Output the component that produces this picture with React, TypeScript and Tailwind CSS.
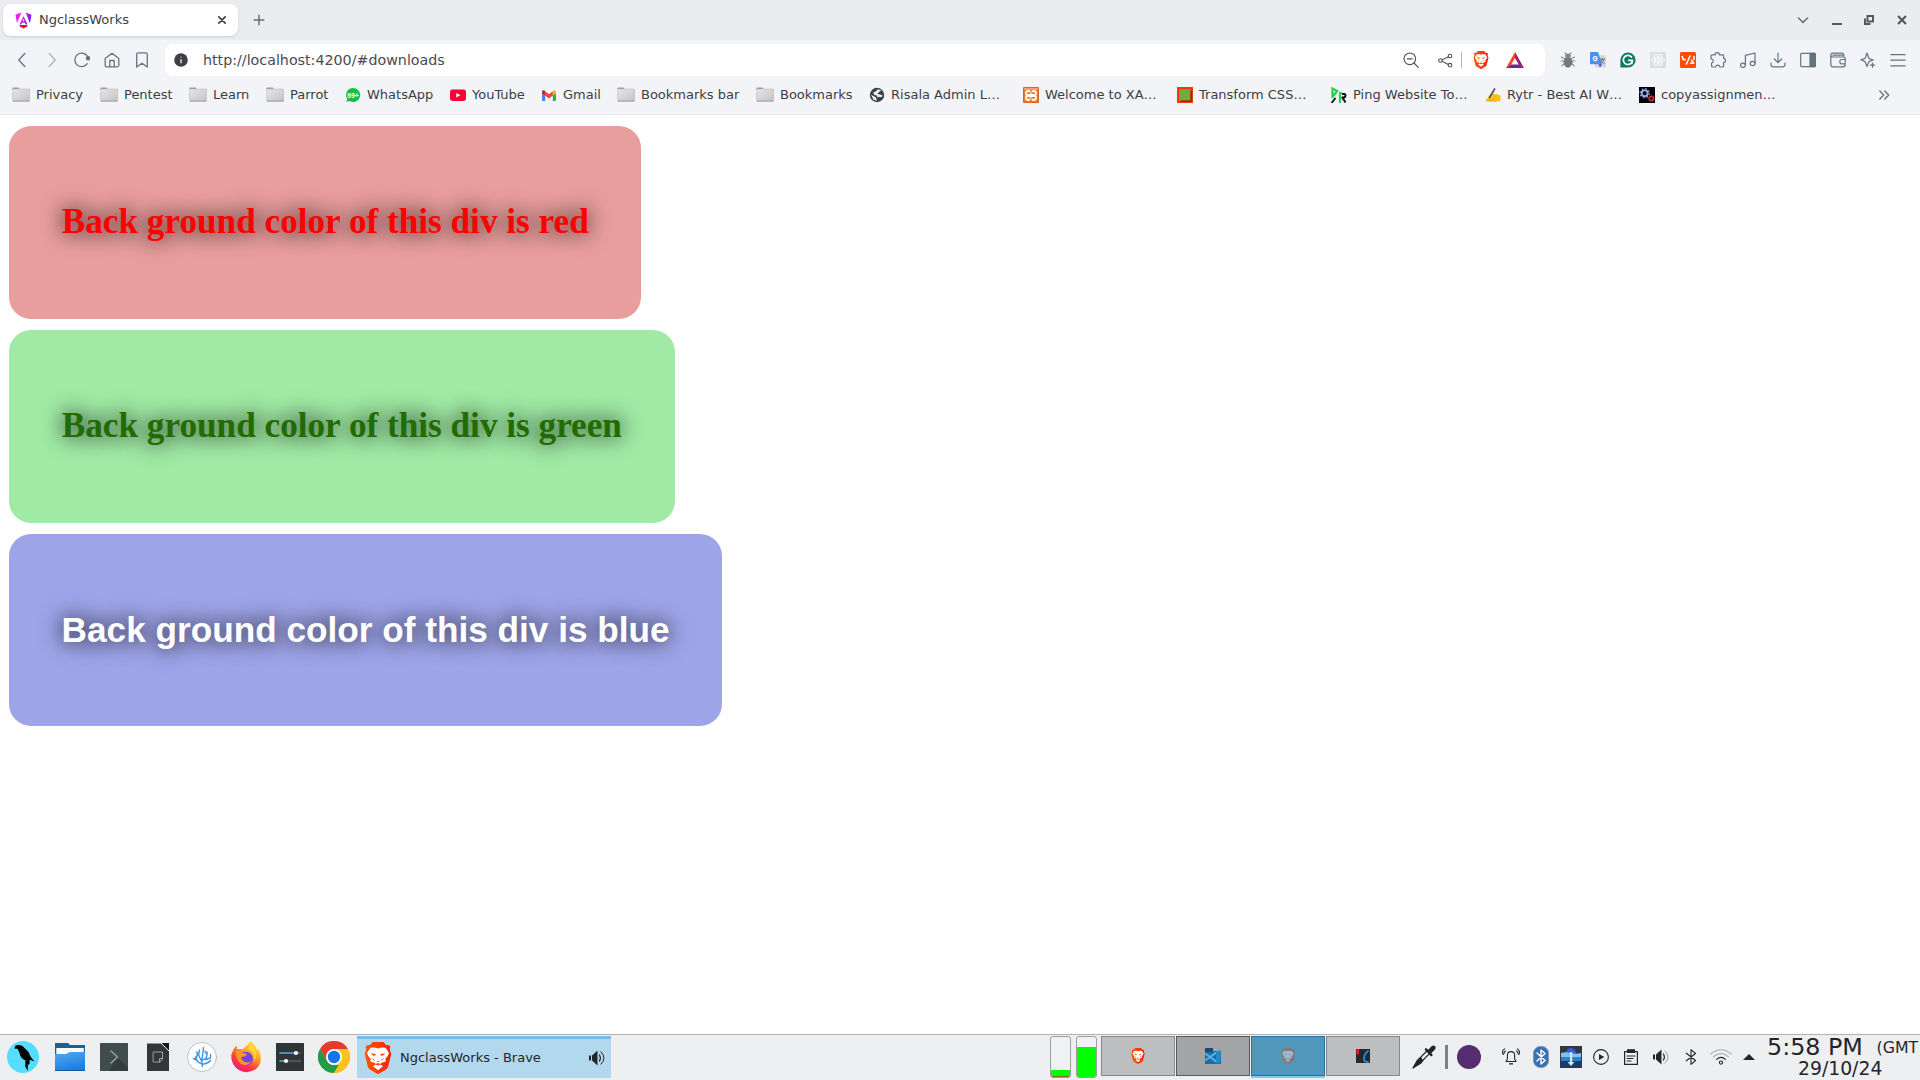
import React from "react";

type IconProps = { children: React.ReactNode; w?: number; h?: number; vb?: string; stroke?: string; sw?: number; fill?: string };

function Svg({ children, w = 16, h, vb = "0 0 16 16", stroke = "none", sw = 1.2, fill = "none" }: IconProps) {
  return (
    <svg width={w} height={h ?? w} viewBox={vb} fill={fill} stroke={stroke} strokeWidth={sw} strokeLinecap="round" strokeLinejoin="round" className="block shrink-0">
      {children}
    </svg>
  );
}

const SLATE = "#62757e";

function Folder() {
  return (
    <Svg w={18} h={16} vb="0 0 18 16">
      <defs>
        <linearGradient id="fold" x1="0" y1="0" x2="1" y2="1">
          <stop offset="0" stopColor="#e6e6e6" />
          <stop offset="1" stopColor="#c4c4c4" />
        </linearGradient>
      </defs>
      <path d="M0.5 3V1.2Q.5.5 1.2.5H6.3Q7 .5 7.2 1.2L7.5 2H16.5Q17.5 2 17.5 3Z" fill="#9b9b9b" />
      <path d="M.5 2H17Q17.6 2 17.6 2.8V13.2Q17.6 14 16.8 14H1.5Q.7 14 .7 13.2Z" fill="url(#fold)" stroke="#b0b0b0" strokeWidth=".5" />
      <path d="M1 14.1H17.2" stroke="#999" strokeWidth=".9" />
    </Svg>
  );
}

function BraveLion({ w, h, faded = false }: { w: number; h: number; faded?: boolean }) {
  return (
    <svg width={w} height={h} viewBox="0 0 28 32" className={faded ? "block shrink-0 opacity-40" : "block shrink-0"}>
      <defs>
        <linearGradient id="brv" x1="0" x2="1">
          <stop offset="0" stopColor="#ff5500" />
          <stop offset=".45" stopColor="#ff4000" />
          <stop offset="1" stopColor="#ff2000" />
        </linearGradient>
      </defs>
      <path d="M8.6 0H19.4L22.3 3.2Q25 2.6 26.4 4.7L25.7 7.5 27.3 12 24.2 24.4Q23.7 26.2 22 27.4L15.4 31.6Q14 32.4 12.6 31.6L6 27.4Q4.3 26.2 3.8 24.4L.7 12 2.3 7.5 1.6 4.7Q3 2.6 5.7 3.2Z" fill="url(#brv)" />
      <path d="M14 6.4 17.5 5.6 21.6 5.8 25 11Q24.6 13.5 21.4 16.7L21.8 19.4 17.6 20.8 16.2 22 19 24.2 14 28.2 9 24.2 11.8 22 10.4 20.8 6.2 19.4 6.6 16.7Q3.4 13.5 3 11L6.4 5.8 10.5 5.6Z" fill="#fff" />
      <path d="M6.8 11.3 11.8 12 11.3 13.6 9.2 13.8ZM21.2 11.3 16.2 12 16.7 13.6 18.8 13.8Z" fill="#ff4710" />
      <path d="M8.2 16 11.4 18.6 9.4 18.2ZM19.8 16 16.6 18.6 18.6 18.2ZM12.2 18.9H15.8L14 20.3Z" fill="#ff4710" />
      <path d="M10.6 22.3 14 20.9 17.4 22.3 14 23.4Z" fill="#ff4710" />
    </svg>
  );
}

function Angular() {
  return (
    <Svg w={17} h={17} vb="0 0 17 17">
      <defs>
        <linearGradient id="ang" x1="0" x2="1" y1="0" y2=".5">
          <stop offset="0" stopColor="#f0f" />
          <stop offset=".45" stopColor="#f02be0" />
          <stop offset="1" stopColor="#6d12f5" />
        </linearGradient>
      </defs>
      <path d="M.5 2.8 6.4.6 2 11.3ZM10.6.6 16.5 2.8 15 11.3ZM8.5 3.9 12.5 12.5H10.7L9.9 10.8H7.1L6.3 12.5H4.5ZM8.5 6.8 7.6 9.2H9.4Z" fill="url(#ang)" fillRule="evenodd" />
      <path d="M4.8 13H12.2L12.4 14.4 8.5 16.6 4.6 14.4Z" fill="#f60b48" />
    </Svg>
  );
}

const WhatsApp = () => (
  <Svg w={16} vb="0 0 16 16">
    <path d="M8.2 1a7 7 0 1 1-3.7 13L1.4 15 2.3 12A7 7 0 0 1 8.2 1Z" fill="#12c143" />
    <text x="8" y="10.8" textAnchor="middle" fontSize="7.4" fontWeight="700" fontFamily="Liberation Sans, sans-serif" fill="#fff" textLength="12" lengthAdjust="spacingAndGlyphs">99+</text>
  </Svg>
);
const YouTube = () => (
  <Svg><rect x="0" y="2.4" width="16" height="11.6" rx="2.4" fill="#f03" /><path d="M6.3 6V10.4L10.4 8.2Z" fill="#fff" /></Svg>
);
const Gmail = () => (
  <Svg>
    <path d="M1 4.5 4.2 7V14H2Q1 14 1 13Z" fill="#4285f4" />
    <path d="M15 4.5 11.8 7V14H14Q15 14 15 13Z" fill="#34a853" />
    <path d="M11.8 4.2 13 3.3Q15 2.6 15 4.8V6.2L11.8 8.6Z" fill="#fbbc04" />
    <path d="M1 6.2V4.8Q1 2.6 3 3.3L4.2 4.2V8.6Z" fill="#c5221f" />
    <path d="M4.2 4.3 8 7.2 11.8 4.3V8.6L8 11.5 4.2 8.6Z" fill="#ea4335" />
  </Svg>
);
const Globe = () => (
  <Svg>
    <circle cx="8" cy="8" r="7.2" fill="#3c4046" />
    <path d="M9 2.2 12.3 3.6 10 5 8.4 6.8 11.6 7.8 13.7 8.5 12.3 10.2 10.5 9.8 8.5 10.6 8 8.6 5.6 8 4 5.8 6.6 4.6ZM2 7.8 4.8 9.3 7 10.4 7.8 13.9 4.4 12.4Z" fill="#f3f4f6" />
  </Svg>
);
const Xampp = () => (
  <Svg>
    <rect width="16" height="16" rx="1" fill="#d9671f" />
    <rect x="1" y="1" width="14" height="2.2" fill="#e9a573" />
    <rect x="1" y="3.2" width="14" height="11.8" fill="#f0761f" />
    <g fill="#fff"><circle cx="5.2" cy="6.2" r="3.1" /><circle cx="10.8" cy="6.2" r="3.1" /><circle cx="5.2" cy="10.8" r="3.1" /><circle cx="10.8" cy="10.8" r="3.1" /><rect x="5" y="6.6" width="6" height="3.8" /></g>
    <path d="M4.6 6.2H6.6M4.6 10.8H6.6M9.4 6.2H11.4M9.4 10.8H11.4" stroke="#f0761f" strokeWidth="1.7" />
    <path d="M8 3.4V6M8 11V14" stroke="#f0761f" strokeWidth="1" />
  </Svg>
);
const GreenSquare = () => (
  <Svg><rect width="16" height="16" fill="#ec3c08" /><rect x="4" y="4" width="11" height="11" fill="#902e08" /><rect x="2.3" y="2.3" width="11" height="11" fill="#77a942" /></Svg>
);
const PingIcon = () => (
  <Svg>
    <path d="M1.5 11V1.5L6.2 4 2.2 9" stroke="#2ecc50" strokeWidth="2.3" strokeLinecap="butt" strokeLinejoin="miter" />
    <path d="M1 15.5 4 11.5" stroke="#111" strokeWidth="1.8" />
    <path d="M9 16V6H11" stroke="#2ecc50" strokeWidth="2.2" strokeLinecap="butt" />
    <path d="M11 7H13Q14.7 7 14.4 8.8 14.2 10.5 12 10.5H11.3L14.6 15.5" stroke="#111" strokeWidth="2" strokeLinecap="butt" />
  </Svg>
);
const Writing = () => (
  <Svg>
    <path d="M.4 13.5 5 7.7 7.5 6.2 9.3 7.3 11.7 7 15.5 8.8V14L10 15 4 14.8Z" fill="#fcc21b" />
    <path d="M1 13.8 6.8 13 11 9.5" stroke="#e59600" strokeWidth=".7" />
    <path d="M4.5 10.5 9.6 2" stroke="#5c5c5c" strokeWidth="1.8" />
  </Svg>
);
const Gears = () => (
  <Svg>
    <rect width="16" height="16" fill="#000" />
    <circle cx="5.7" cy="6.2" r="3" stroke="#8fa8e8" strokeWidth="2" /><circle cx="5.7" cy="6.2" r="4.6" stroke="#8fa8e8" strokeWidth="1.2" strokeDasharray="1.6 2" strokeLinecap="butt" />
    <circle cx="12.3" cy="11.5" r="2" stroke="#d6303c" strokeWidth="1.4" /><circle cx="12.3" cy="11.5" r="3" stroke="#d6303c" strokeWidth="1" strokeDasharray="1.1 1.2" strokeLinecap="butt" />
  </Svg>
);

const bookmarks = [
  { t: "Privacy", w: "w-[88px]", i: <Folder /> },
  { t: "Pentest", w: "w-[89px]", i: <Folder /> },
  { t: "Learn", w: "w-[77px]", i: <Folder /> },
  { t: "Parrot", w: "w-[79px]", i: <Folder /> },
  { t: "WhatsApp", w: "w-[105px]", i: <WhatsApp /> },
  { t: "YouTube", w: "w-[91px]", i: <YouTube /> },
  { t: "Gmail", w: "w-[76px]", i: <Gmail /> },
  { t: "Bookmarks bar", w: "w-[139px]", i: <Folder /> },
  { t: "Bookmarks", w: "w-[113px]", i: <Folder /> },
  { t: "Risala Admin L…", w: "w-[154px]", i: <Globe /> },
  { t: "Welcome to XA…", w: "w-[154px]", i: <Xampp /> },
  { t: "Transform CSS…", w: "w-[154px]", i: <GreenSquare /> },
  { t: "Ping Website To…", w: "w-[154px]", i: <PingIcon /> },
  { t: "Rytr - Best AI W…", w: "w-[154px]", i: <Writing /> },
  { t: "copyassignmen…", w: "w-[154px]", i: <Gears /> },
];

function TabStrip() {
  return (
    <div className="flex h-10 items-center bg-[#ebecf0] pl-[3px]">
      <div className="flex h-8 w-[235px] items-center rounded-lg bg-white pl-[11.5px] pr-[11px] shadow-sm">
        <Angular />
        <span className="ml-[7.5px] flex-1 text-[13px] leading-4 text-[#3b3e44]">NgclassWorks</span>
        <Svg w={10} vb="0 0 10 10" stroke="#3e4145" sw={1.7}><path d="M1.8 1.8 8.2 8.2M8.2 1.8 1.8 8.2" /></Svg>
      </div>
      <div className="ml-[15px]"><Svg w={12} vb="0 0 12 12" stroke="#6b6d70" sw={1.5}><path d="M6 1.2V10.8M1.2 6H10.8" /></Svg></div>
      <div className="ml-auto flex items-center pr-px">
        <div className="flex w-[34px] justify-center"><Svg w={12} vb="0 0 12 12" stroke={SLATE} sw={1.6}><path d="M1.5 4 6 8.3 10.5 4" /></Svg></div>
        <div className="flex w-[33px] justify-center"><Svg w={12} vb="0 0 12 12"><rect x="1" y="9" width="10" height="2" fill="#55585c" /></Svg></div>
        <div className="flex w-[32px] justify-center"><Svg w={12} vb="0 0 12 12" stroke="#55585c" sw={2}><path d="M4.5 2H10V7.5H4.5ZM2 4.5V10H7.5" strokeLinecap="butt" strokeLinejoin="miter" /></Svg></div>
        <div className="flex w-[34px] justify-center"><Svg w={12} vb="0 0 12 12" stroke="#55585c" sw={2.2}><path d="M2 2 10 10M10 2 2 10" strokeLinecap="butt" /></Svg></div>
      </div>
    </div>
  );
}

const navIcons = [
  <path key="b" d="M10.8 1.5 4.8 8 10.8 14.5" />,
  <path key="f" d="M5.2 1.5 11.2 8 5.2 14.5" opacity=".5" />,
  <g key="r"><path d="M13.3 11.7A6.8 6.8 0 1 1 13.6 4.6" /><circle cx="14" cy="6.2" r="1.6" fill={SLATE} /></g>,
  <path key="h" d="M1.2 6.5 8 1.2 14.8 6.5V13.3Q14.8 14.8 13.3 14.8H2.7Q1.2 14.8 1.2 13.3ZM5.8 14.6V8.5H10.2V14.6" />,
  <path key="k" d="M2.7 2.2Q2.7.8 4.1.8H11.9Q13.3.8 13.3 2.2V15L8 11.2 2.7 15Z" />,
];

const extensions: React.ReactNode[] = [
  <Svg key="bug" stroke="#8b8b8b" sw={1.1}>
    <path d="M4.2 6.5 1.5 5M4 9H1M4.5 11.5 1.8 14M11.8 6.5 14.5 5M12 9H15M11.5 11.5 14.2 14M6 2 4.8.8M10 2 11.2.8" />
    <ellipse cx="8" cy="10" rx="4" ry="5.3" fill="#777" stroke="#666" strokeWidth=".6" /><ellipse cx="8" cy="3.8" rx="2.8" ry="2.2" fill="#858585" stroke="none" />
  </Svg>,
  <Svg key="tr">
    <rect x="5" y="3.2" width="11" height="12.3" rx="1" fill="#d4d7dc" /><path d="M1 0H8L12 12.2H1Q0 12.2 0 11.2V1Q0 0 1 0Z" fill="#4f8df6" /><path d="M8.5 12.2H12L10 15.5Z" fill="#2b57b5" />
    <path d="M7 5.3A2.1 2.1 0 1 0 7 7.8V6.5H5.2" stroke="#fff" strokeWidth="1.1" /><path d="M10.3 7.2H14.7M12.3 6.2V7.2M13.8 7.4Q13.2 10.5 10.8 11.6M11.1 8Q12 10.5 14.4 11.8" stroke="#5d6e7a" strokeWidth=".9" />
  </Svg>,
  <Svg key="gr"><path d="M8 .4A7.6 7.6 0 1 1 8 15.6H1.3Q.4 15.6.4 14.7V8A7.6 7.6 0 0 1 8 .4Z" fill="#087863" /><path d="M11.5 5A4.6 4.6 0 1 0 12.5 8.3H8.6M12.5 8.3 11.8 11.5" stroke="#fff" strokeWidth="1.7" /></Svg>,
  <Svg key="re"><rect width="16" height="16" fill="#dcdddf" /><g stroke="#fff" strokeWidth=".8"><ellipse cx="8" cy="8" rx="6.5" ry="2.6" /><ellipse cx="8" cy="8" rx="6.5" ry="2.6" transform="rotate(60 8 8)" /><ellipse cx="8" cy="8" rx="6.5" ry="2.6" transform="rotate(120 8 8)" /></g><circle cx="8" cy="8" r="1.4" fill="#fff" /></Svg>,
  <Svg key="or"><rect width="16" height="16" rx="1.5" fill="#ff4a0b" /><path d="M2.2 4.6 3.2 7.6H5.2M6.4 12 10 4M10.6 11.3H13.6L11.6 8.2M13.9 4.6V7.6" stroke="#fff" strokeWidth="1.6" /></Svg>,
  <Svg key="pz" stroke={SLATE}><path d="M2 2.8H5.2Q5.2 .7 7.3 .7 9.4.7 9.4 2.8H12.8Q13.6 2.8 13.6 3.6V6.4Q15.5 6.6 15.5 8.6 15.5 10.5 13.6 10.7V14Q13.6 15 12.6 15H9.8Q9.6 13.2 7.7 13.2 5.8 13.2 5.6 15H2.5Q1.6 15 1.6 14V11Q3.4 10.4 3.4 8.9 3.4 7.3 1 6.8V3.8Q1 2.8 2 2.8Z" /></Svg>,
  <Svg key="mu" stroke={SLATE}><path d="M5.4 13V3.3L15 1V11.2" /><ellipse cx="3" cy="13.2" rx="2.4" ry="2.1" /><ellipse cx="12.6" cy="11.5" rx="2.4" ry="2.1" /></Svg>,
  <Svg key="dl" stroke={SLATE}><path d="M8 1V10.5M4.3 7 8 10.7 11.7 7M1 11V12.6Q1 14.8 3.2 14.8H12.8Q15 14.8 15 12.6V11" /></Svg>,
  <Svg key="sb" stroke={SLATE}><rect x=".7" y="1.3" width="14.6" height="13.4" rx="1" /><path d="M10 1.3H14.5Q15.3 1.3 15.3 2V14Q15.3 14.7 14.5 14.7H10Z" fill={SLATE} /></Svg>,
  <Svg key="wa" stroke={SLATE}><path d="M13.8 5V3.2Q13.8 1.2 11.8 1.2H2.6Q.8 1.2.8 3 .8 5 2.8 5H13.5Q15.2 5 15.2 6.7V12.8Q15.2 14.8 13.2 14.8H3Q.8 14.8.8 12.6V3M2.8 3.1H13.5M15 7.5H11.8Q9.8 7.5 9.8 9.7 9.8 11.8 11.8 11.8H15" /></Svg>,
  <Svg key="sp" stroke={SLATE}><path d="M7 1 8.7 5.8Q9 6.6 9.8 6.9L13.3 8 9.6 9.4Q8.8 9.8 8.5 10.5L7 14.5 5.4 10.4Q5.1 9.7 4.4 9.4L.8 7.8 4.5 6.6Q5.2 6.3 5.5 5.5ZM12.5 11V15.3M10.4 13.2H14.8" /></Svg>,
  <Svg key="me" stroke={SLATE}><path d="M.8 2.6H15.2M.8 8.2H15.2M.8 13.8H15.2" /></Svg>,
];

function Toolbar() {
  return (
    <div className="flex h-10 items-center bg-[#f3f4f7] pl-[7px]">
      {navIcons.map((p, i) => (
        <div key={i} className="flex w-[30px] justify-center"><Svg stroke={SLATE} sw={1.3}>{p}</Svg></div>
      ))}
      <div className="ml-[8px] flex h-8 w-[1380px] items-center rounded-lg bg-white pl-[9px]">
        <Svg w={14} vb="0 0 14 14"><circle cx="7" cy="7" r="6.8" fill="#3e4043" /><path d="M7 6.2V10.2M7 3.8V4.6" stroke="#e8e8e8" strokeWidth="1.4" strokeLinecap="butt" /></Svg>
        <span className="ml-[15px] flex-1 text-[14.25px] leading-5 text-[#494b50]">http://localhost:4200/#downloads</span>
        <div className="flex w-[142px] items-center">
          <Svg stroke="#505358"><circle cx="6.8" cy="6.8" r="5.8" /><path d="M4.3 6.8H9.3M11 11 15.3 15.3" /></Svg>
          <div className="ml-[19px]"><Svg w={15} stroke="#505358"><circle cx="2.6" cy="8" r="1.9" /><circle cx="12.8" cy="3.2" r="1.9" /><circle cx="12.8" cy="13" r="1.9" /><path d="M4.5 7.2 11 4M4.5 8.8 11 12.2" /></Svg></div>
          <div className="ml-[8px] h-4 w-px bg-[#b5b7ba]" />
          <div className="ml-[11px]"><BraveLion w={16} h={18} /></div>
          <div className="ml-[17px]">
            <Svg w={18} h={16} vb="0 0 18 16">
              <path d="M9 0 0 16 5.2 12.8 9 6Z" fill="#ff4724" /><path d="M9 0 18 16 12.8 12.8 9 6Z" fill="#9e1f63" /><path d="M0 16H18L12.8 12.5H5.2Z" fill="#662d91" />
            </Svg>
          </div>
        </div>
      </div>
      <div className="ml-[8px] flex">
        {extensions.map((e, i) => <div key={i} className="flex w-[30px] justify-center">{e}</div>)}
      </div>
    </div>
  );
}

function BookmarkBar() {
  return (
    <div className="flex h-[35px] items-center border-b border-[#e6e7eb] bg-[#f3f4f7] pb-[4px] pl-[12px] pt-0 text-[13px] text-[#3b3e44]">
      {bookmarks.map((b) => (
        <div key={b.t} className={`${b.w} flex shrink-0 items-center gap-[6px] whitespace-nowrap leading-4`}>
          {b.i}
          <span>{b.t}</span>
        </div>
      ))}
      <div className="ml-[85px]"><Svg w={12} vb="0 0 12 12" stroke={SLATE} sw={1.4}><path d="M1.8 2 5.6 6 1.8 10M6.8 2 10.6 6 6.8 10" /></Svg></div>
    </div>
  );
}

function Page() {
  return (
    <main className="flex flex-1 flex-col items-start gap-[11px] bg-white pl-[9px] pt-[11px] text-[35.2px] font-bold leading-[40px] [text-shadow:0_0_22px_#000]">
      <div className="flex h-[193px] w-[632px] items-center rounded-[22px] bg-[#e89e9c] pb-[2px] pl-[52.8px] font-['Liberation_Serif',serif] text-[#ff0000]">
        <h1 className="whitespace-nowrap">Back ground color of this div is red</h1>
      </div>
      <div className="flex h-[193px] w-[666px] items-center rounded-[22px] bg-[#a0eaa5] pb-[2px] pl-[52.8px] font-['Liberation_Serif',serif] text-[#226b00]">
        <h1 className="whitespace-nowrap">Back ground color of this div is green</h1>
      </div>
      <div className="flex h-[192px] w-[713px] items-center rounded-[22px] bg-[#9ea4e8] pl-[52.6px] font-['Liberation_Sans',sans-serif] text-white">
        <h1 className="whitespace-nowrap">Back ground color of this div is blue</h1>
      </div>
    </main>
  );
}

const launchers: React.ReactNode[] = [
  <Svg key="p" w={32} vb="0 0 32 32"><circle cx="16" cy="16" r="16" fill="#55dcff" /><path d="M8 8Q7 4.5 10.5 4 15 3.5 17.5 7L21.5 11 23.5 15.5 27.5 20.5 22.8 18.8 22.5 23 20.8 24V30L18.2 25.5 18.5 19.5Q13.5 17.5 12.5 12L10.8 8.3Q9 7 8 8Z" fill="#000" /></Svg>,
  <Svg key="f" w={30} h={28} vb="0 0 30 28">
    <defs><linearGradient id="fb" x1="0" y1="0" x2=".4" y2="1"><stop offset="0" stopColor="#56a7ed" /><stop offset="1" stopColor="#1b80e2" /></linearGradient></defs>
    <path d="M0 0H13L15 2H30V11H0Z" fill="#1d618f" /><path d="M1.3 5H28.8V11H1.3Z" fill="#f6f8f9" /><path d="M0 11 11 11 15 9H30V28H0Z" fill="url(#fb)" /><path d="M0 27.5H30" stroke="#15599f" />
  </Svg>,
  <Svg key="t" w={28} vb="0 0 28 28"><rect width="28" height="28" rx=".6" fill="#414c4d" /><path d="M17 14 28 25V28H9Z" fill="#333d3e" /><path d="M11 8 17.5 14 11 20" stroke="#9fa6a6" strokeWidth="1.2" /></Svg>,
  <Svg key="d" w={22} h={28} vb="0 0 22 28"><path d="M0 .5H14L22 8V28H0Z" fill="#34373a" /><path d="M14 0H22V8Z" fill="#17191b" /><path d="M14 0 22 8" stroke="#eee" strokeWidth="1" /><path d="M6.5 9H15.5V16L13 19H6.5ZM12.5 19V15.5H15.5" stroke="#9d9fa1" strokeWidth="1" /></Svg>,
  <Svg key="c" w={30} vb="0 0 30 30"><circle cx="15" cy="15" r="14.5" fill="#fff" stroke="#a9b2b6" strokeWidth=".8" /><path d="M15.5 24.5Q14 20 15.5 14L16.5 5.5M15 22Q9 20 8.5 15M10.5 18.5 6.5 16.5M9.5 16 10.5 11M14.5 19 11.5 13 12.5 8M12 13.5 9.5 10M15.5 18Q21 17 20 10M20 13 17.8 9M19 17.5 23.5 16 23.5 12.5M15.5 22Q20 22.5 23.5 18.5" stroke="#4197ec" strokeWidth="1.4" /></Svg>,
  <Svg key="x" w={30} h={32} vb="0 0 30 32">
    <defs><linearGradient id="ff" x1=".8" y1="0" x2=".2" y2="1"><stop offset="0" stopColor="#fff14a" /><stop offset=".4" stopColor="#ff9b23" /><stop offset=".7" stopColor="#ff3647" /><stop offset="1" stopColor="#e31587" /></linearGradient></defs>
    <path d="M20 0Q25 4 26 9L28 8Q33 22 25 28 16 34 7 28.5-1 22 .5 13L3 7 6 4.5V8L12 8Q16 4 20 0Z" fill="url(#ff)" /><circle cx="15" cy="17.5" r="6.8" fill="#7542e5" /><path d="M5 10Q9 9 12 12L16 13Q15 16 10 16 11 21 17 21.5L20 20Q17 26 10 23 4 18 5 10Z" fill="#ff9525" /><path d="M17 8Q24 11 23 20 27 15 24 8L20 2Z" fill="#ffd43b" />
  </Svg>,
  <Svg key="s" w={28} vb="0 0 28 28"><rect width="28" height="28" rx=".6" fill="#303437" /><path d="M4 10H20" stroke="#46aee8" strokeWidth="1.6" /><path d="M20 10H24.5M10 18H24.5" stroke="#5b6063" strokeWidth="1.6" /><path d="M4 18H10" stroke="#46aee8" strokeWidth="1.6" /><circle cx="20" cy="10" r="2.1" fill="#fff" /><circle cx="10" cy="18" r="2.1" fill="#fff" /></Svg>,
  <Svg key="g" w={32} vb="0 0 32 32"><circle cx="16" cy="16" r="16" fill="#fcc31e" /><path d="M2.1 8A16 16 0 0 1 29.9 8H16L9.1 20Z" fill="#e33b2e" /><path d="M2.1 8 9.1 20Q11.5 24 16 24H22.9L16 32A16 16 0 0 1 2.1 8Z" fill="#1f9d4d" /><path d="M22.9 20 16 32A16 16 0 0 0 29.9 8H16Z" fill="#fcc31e" /><circle cx="16" cy="16" r="8" fill="#fff" /><circle cx="16" cy="16" r="6.2" fill="#1a73e8" /></Svg>,
];

const Speaker = ({ faint = false }: { faint?: boolean }) => (
  <Svg><path d="M0 5.5H2V10.5H0ZM3 5.5 8.5.5V15.5L3 10.5Z" fill="#232629" /><path d="M10.5 5Q12.3 8 10.5 11" stroke="#232629" /><path d="M12 1.8Q18.2 8 12 14.2" stroke="#232629" strokeWidth="1" opacity={faint ? 0.4 : 1} /></Svg>
);

const tray: { w: string; i: React.ReactNode }[] = [
  { w: "w-[32px]", i: <Svg stroke="#232629" sw={1.1} w={18} vb="0 0 18 18"><path d="M4 13.5H14L12.6 11V7Q12.6 3.6 9 3.6 5.4 3.6 5.4 7V11ZM3.5 3Q1.8 4 1.6 6.5M2.6.9Q0 2.5.3 6M14.5 3Q16.2 4 16.4 6.5M15.4.9Q18 2.5 17.7 6" /><path d="M7 15.2H11V16.5H7Z" fill="#232629" stroke="none" /></Svg> },
  { w: "w-[28px]", i: <Svg w={16} h={22} vb="0 0 16 22"><rect x=".3" y=".3" width="15.4" height="21.4" rx="7.2" fill="#3d72b1" stroke="#7d9dc5" strokeWidth=".6" /><path d="M4 7 12 14.5 8 18V4L12 7.5 4 15" stroke="#fff" strokeWidth="1.4" /></Svg> },
  { w: "w-[32px]", i: <Svg w={22} vb="0 0 22 22"><rect width="22" height="22" fill="#303841" /><circle cx="11" cy="7" r="5" fill="#385bda" /><path d="M1 8Q6 6 11 8T21 8V20H1Z" fill="#2f83c4" /><path d="M1 7Q6 5.5 11 7T21 7V11H1Z" fill="#7cc4ee" /><path d="M1 15H21V20H1Z" fill="#123f78" /><path d="M10 6H12.2V16H14.5L11 20 7.5 16H10Z" fill="#cfe9fa" /></Svg> },
  { w: "w-[28px]", i: <Svg stroke="#232629" sw={1.1}><circle cx="8" cy="8" r="7.4" /><path d="M6 4.9V11.1L11.3 8Z" fill="#232629" stroke="none" /></Svg> },
  { w: "w-[32px]", i: <Svg stroke="#232629" sw={1.2}><rect x="1.6" y="2.6" width="12.8" height="12.8" /><path d="M4 .2H12V4H4Z" fill="#232629" stroke="none" /><path d="M4 7H12M4 9.5H10M4 12H8" /></Svg> },
  { w: "w-[28px]", i: <Speaker faint /> },
  { w: "w-[32px]", i: <Svg stroke="#232629" sw={1.1}><path d="M3.3 4.2 12.5 11.5 8 15.4V.6L12.5 4.5 3.3 11.8" /></Svg> },
  { w: "w-[28px]", i: <Svg w={22} h={16} vb="0 0 22 16" stroke="#232629" sw={1.1}><path d="M.8 5Q11-3.5 21.2 5M3.6 7.7Q11 1.3 18.4 7.7" opacity=".35" /><path d="M6.6 10.3Q11 6.5 15.4 10.3" /><circle cx="11" cy="13.6" r="1.6" /></Svg> },
  { w: "w-[27px]", i: <Svg w={12} h={6} vb="0 0 12 6"><path d="M0 6 6 0 12 6Z" fill="#232629" /></Svg> },
];

function Taskbar() {
  return (
    <footer className="flex h-[46px] shrink-0 items-start overflow-hidden border-t border-[#b0b2b4] bg-[#eeeff1] text-[#232629]">
      <div className="flex h-[44px] w-[357px] shrink-0 items-center pl-px">
        <div className="flex w-11 justify-center">{launchers[0]}</div>
        <div className="ml-[3px] flex">{launchers.slice(1).map((l, i) => <div key={i} className="flex w-11 items-center justify-center">{l}</div>)}</div>
      </div>
      <div className="mt-px flex h-[42px] w-[254px] shrink-0 items-center border-t-[3px] border-[#74bfea] bg-[#b2d8ed] pb-[2px] pl-[7px] pr-[6px]">
        <BraveLion w={28} h={32} />
        <span className="ml-[8px] flex-1 text-[13px]">NgclassWorks - Brave</span>
        <Speaker />
      </div>
      <div className="ml-[439px] mt-px flex shrink-0 gap-[5px]">
        <div className="flex h-[42px] w-[21px] flex-col justify-end overflow-hidden rounded-[3px] border border-[#9c9ea0] bg-[#f0f1f2]"><div className="h-[7px] border-b border-[#8b6d14] bg-[#00ff00]" /></div>
        <div className="flex h-[42px] w-[21px] flex-col justify-end overflow-hidden rounded-[3px] border border-[#9c9ea0] bg-[#f0f1f2]"><div className="h-[30px] bg-[#00ff00]" /></div>
      </div>
      <div className="ml-[4px] mt-px flex shrink-0 gap-px">
        <div className="flex h-10 w-[74px] items-center justify-center border border-[#86888a] bg-[#bdbec0]"><BraveLion w={14} h={16} /></div>
        <div className="flex h-10 w-[74px] items-center justify-center border border-[#57595b] bg-[#a3a4a6]">
          <Svg><path d="M0 0H8V3H16V16H0Z" fill="#1c6da6" /><path d="M0 0H8V4H0Z" fill="#174b75" /><path d="M1 6 12 14M1 12 12 4" stroke="#54b4ef" strokeWidth="2" /><path d="M11 3.5 15.5 2V15L11 15.5Z" fill="#2489ca" /></Svg>
        </div>
        <div className="flex h-[42px] w-[74px] flex-col bg-[#85c8ee]"><div className="flex h-10 items-center justify-center border border-[#2f7299] bg-[#5197bc]"><BraveLion w={14} h={16} faded /></div></div>
        <div className="flex h-10 w-[74px] items-center justify-center border border-[#86888a] bg-[#bdbec0]">
          <Svg w={14} vb="0 0 14 14"><rect width="14" height="14" fill="#25272b" /><path d="M.5 0H3V6L1.8 5 .5 6Z" fill="#e01935" /><path d="M12 2Q8 5 8 10 8 13 12 13" stroke="#2187d8" strokeWidth="2" /></Svg>
        </div>
      </div>
      <div className="ml-[12px] flex h-[44px] shrink-0 items-center">
        <Svg w={24} vb="0 0 25 25" stroke="#232629" sw={1.3}><path d="M16.5 5.2 5.5 16.3 3 21.5 8.5 18.7 19.2 8" fill="#eeeff1" /><path d="M9 13 5.5 16.5 1 24 9 19 11 16.5Z" fill="#232629" /><path d="M14.5 4.5 20.2 10.5" strokeWidth="2.5" /><path d="M16.5 6.5 20.5 2Q22 .5 23.6 1.8 24.6 3.2 23 4.8L18.8 8.8Z" fill="#232629" /></Svg>
        <div className="ml-[9px] h-6 w-[3px] bg-[#7e8082]" />
        <div className="ml-[9px] size-6 rounded-full bg-[#552c70]" />
        <div className="ml-[14px] flex items-center">
          {tray.map((t, i) => <div key={i} className={`${t.w} flex items-center justify-center`}>{t.i}</div>)}
        </div>
      </div>
      <div className="ml-[5px] flex w-[155px] shrink-0 flex-col whitespace-nowrap">
        <div className="flex h-[25px] items-center">
          <span className="w-[109.5px] text-[23.8px] leading-[25px]">5:58 PM</span>
          <span className="text-[15.8px] leading-[25px]">(GMT</span>
        </div>
        <span className="pl-[31px] text-[18.8px] leading-[17px]">29/10/24</span>
      </div>
    </footer>
  );
}

export default function App() {
  return (
    <div className="flex h-[1080px] w-[1920px] flex-col overflow-hidden bg-white font-['DejaVu_Sans',sans-serif]">
      <TabStrip />
      <Toolbar />
      <BookmarkBar />
      <Page />
      <Taskbar />
    </div>
  );
}
